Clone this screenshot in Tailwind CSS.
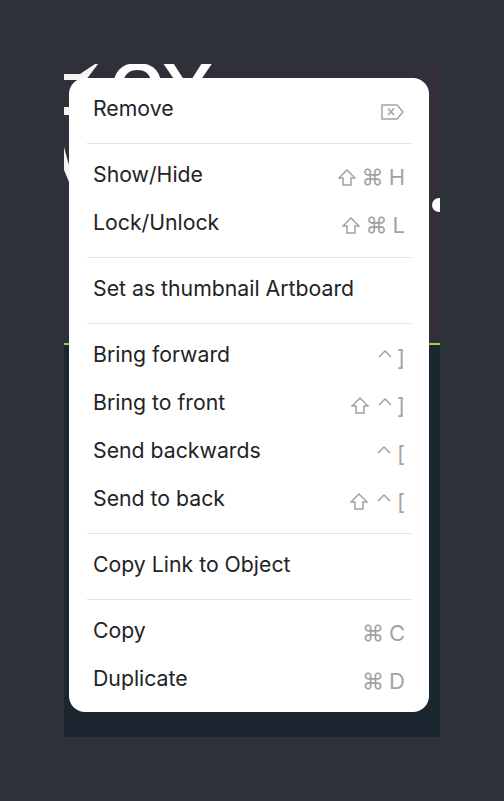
<!DOCTYPE html>
<html lang="en">

<head>
    <meta charset="UTF-8">
    <meta name="viewport" content="width=device-width, initial-scale=1.0">
    <title>Context menu</title>
    <script src="https://cdn.jsdelivr.net/npm/@tailwindcss/browser@4"></script>
</head>

<body class="bg-[#2e323b] h-[801px] w-[504px] overflow-hidden font-['Inter',sans-serif]">
    <div class="pt-16 pl-16">
        <!-- artboard behind the menu -->
        <div class="relative w-[376px] h-[673px] overflow-hidden bg-[#1c2630]">
            <div class="h-[281px] bg-[#322f3b] border-b-2 border-[#8fd63f]"></div>
            <div class="absolute left-[44px] top-[-33px] text-white text-[105px] leading-none tracking-[-5px] font-['Liberation_Sans',sans-serif] whitespace-nowrap">ox</div>
            <svg class="absolute left-0 top-0 w-[40px] h-[125px]" viewBox="0 0 40 125" fill="#f4f4f4">
                <path d="M0 10h16L31 0h3L22 16H0z"/>
                <path d="M0 43h6v8H0z"/>
                <path d="M0 83l5 18v17L0 106z"/>
            </svg>
            <div class="absolute right-0 top-[134px] w-[8px] h-[14px] rounded-l-full bg-white"></div>
        </div>
    </div>

    <!-- context menu -->
    <div class="absolute left-[69px] top-[78px] w-[360px] h-[634px] bg-white rounded-2xl pt-[7px] text-[#222326] text-[21.25px]">
        <div class="h-12 pb-[1px] flex items-center justify-between px-6">
            <span>Remove</span>
            <svg class="w-[24px] h-[18px] mt-[6px]" viewBox="0 0 24 18" fill="none" stroke="#a3a3a3" stroke-width="1.5"><path d="M1 2h15l6 7-6 7H1z"/><path d="M7 5.5l6 6.5M13 5.5l-6 6.5"/></svg>
        </div>
        <div class="h-px bg-[#e2e2e2] mx-[18px] mt-[10px] mb-[7px]"></div>

        <div class="h-12 pb-[1px] flex items-center justify-between px-6">
            <span>Show/Hide</span>
            <span class="flex items-center gap-[6px] text-[#a3a3a3] text-[22px] mt-[6px]">
                <svg class="w-[18px] h-[18px]" viewBox="0 0 18 18" fill="none" stroke="#a3a3a3" stroke-width="1.5"><path d="M9 1l8 8h-4v7H5V9H1z"/></svg>
                <span class="flex gap-[5px]"><span>⌘</span><span>H</span></span>
            </span>
        </div>
        <div class="h-12 pb-[1px] flex items-center justify-between px-6">
            <span>Lock/Unlock</span>
            <span class="flex items-center gap-[6px] text-[#a3a3a3] text-[22px] mt-[6px]">
                <svg class="w-[18px] h-[18px]" viewBox="0 0 18 18" fill="none" stroke="#a3a3a3" stroke-width="1.5"><path d="M9 1l8 8h-4v7H5V9H1z"/></svg>
                <span class="flex gap-[5px]"><span>⌘</span><span>L</span></span>
            </span>
        </div>
        <div class="h-px bg-[#e2e2e2] mx-[18px] mt-[10px] mb-[7px]"></div>

        <div class="h-12 pb-[1px] flex items-center px-6">Set as thumbnail Artboard</div>
        <div class="h-px bg-[#e2e2e2] mx-[18px] mt-[10px] mb-[7px]"></div>

        <div class="h-12 pb-[1px] flex items-center justify-between px-6">
            <span>Bring forward</span>
            <span class="flex items-center gap-[9px] text-[#a3a3a3] mt-[6px]">
                <span class="flex items-center gap-[5px]">
                    <svg class="w-[14px] h-[8px] mb-2" viewBox="0 0 14 8" fill="none" stroke="#a3a3a3" stroke-width="1.5"><path d="M1 7l6-6 6 6"/></svg>
                    <span class="text-[22px] leading-none">]</span>
                </span>
            </span>
        </div>
        <div class="h-12 pb-[1px] flex items-center justify-between px-6">
            <span>Bring to front</span>
            <span class="flex items-center gap-[9px] text-[#a3a3a3] mt-[6px]">
                <svg class="w-[18px] h-[18px]" viewBox="0 0 18 18" fill="none" stroke="#a3a3a3" stroke-width="1.5"><path d="M9 1l8 8h-4v7H5V9H1z"/></svg>
                <span class="flex items-center gap-[5px]">
                    <svg class="w-[14px] h-[8px] mb-2" viewBox="0 0 14 8" fill="none" stroke="#a3a3a3" stroke-width="1.5"><path d="M1 7l6-6 6 6"/></svg>
                    <span class="text-[22px] leading-none">]</span>
                </span>
            </span>
        </div>
        <div class="h-12 pb-[1px] flex items-center justify-between px-6">
            <span>Send backwards</span>
            <span class="flex items-center gap-[9px] text-[#a3a3a3] mt-[6px]">
                <span class="flex items-center gap-[6px]">
                    <svg class="w-[14px] h-[8px] mb-2" viewBox="0 0 14 8" fill="none" stroke="#a3a3a3" stroke-width="1.5"><path d="M1 7l6-6 6 6"/></svg>
                    <span class="text-[22px] leading-none">[</span>
                </span>
            </span>
        </div>
        <div class="h-12 pb-[1px] flex items-center justify-between px-6">
            <span>Send to back</span>
            <span class="flex items-center gap-[9px] text-[#a3a3a3] mt-[6px]">
                <svg class="w-[18px] h-[18px]" viewBox="0 0 18 18" fill="none" stroke="#a3a3a3" stroke-width="1.5"><path d="M9 1l8 8h-4v7H5V9H1z"/></svg>
                <span class="flex items-center gap-[6px]">
                    <svg class="w-[14px] h-[8px] mb-2" viewBox="0 0 14 8" fill="none" stroke="#a3a3a3" stroke-width="1.5"><path d="M1 7l6-6 6 6"/></svg>
                    <span class="text-[22px] leading-none">[</span>
                </span>
            </span>
        </div>
        <div class="h-px bg-[#e2e2e2] mx-[18px] mt-[10px] mb-[7px]"></div>

        <div class="h-12 pb-[1px] flex items-center px-6">Copy Link to Object</div>
        <div class="h-px bg-[#e2e2e2] mx-[18px] mt-[10px] mb-[7px]"></div>

        <div class="h-12 pb-[1px] flex items-center justify-between px-6">
            <span>Copy</span>
            <span class="flex gap-[5px] text-[#a3a3a3] text-[22px] mt-[6px]"><span>⌘</span><span>C</span></span>
        </div>
        <div class="h-12 pb-[1px] flex items-center justify-between px-6">
            <span>Duplicate</span>
            <span class="flex gap-[5px] text-[#a3a3a3] text-[22px] mt-[6px]"><span>⌘</span><span>D</span></span>
        </div>
    </div>
</body>

</html>
